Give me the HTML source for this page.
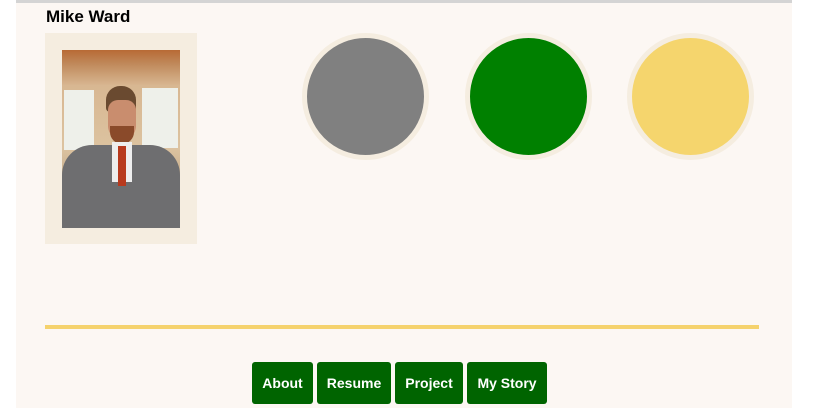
<!DOCTYPE html>
<html><head><style>
body{margin:0;width:816px;height:408px;background:#fff;overflow:hidden;font-family:"Liberation Sans",Arial,sans-serif;position:relative}
.main{position:absolute;left:16px;top:0;width:776px;height:408px;background:#fcf7f3;border-top:3px solid #d4d4d4;box-sizing:border-box}
h1{position:absolute;left:46px;top:7px;margin:0;font-size:17px;font-weight:bold;color:#000}
.frame{position:absolute;left:45px;top:33px;width:152px;height:211px;background:#f5ede0}
.photo{position:absolute;left:62px;top:50px;width:118px;height:178px;overflow:hidden;background:linear-gradient(#b86a35 0,#c08a5c 8%,#d8b792 20%,#dcc3a0 55%,#c9b090 70%,#e6e2dc 100%)}
.c{position:absolute;top:33px;width:117px;height:117px;border-radius:50%;border:5px solid #f5ede0}
.bar{position:absolute;left:45px;top:325px;width:714px;height:4px;background:#f5d26d}
.btn{position:absolute;top:362px;height:42px;background:#006400;color:#fff;font-weight:bold;font-size:14px;line-height:42px;text-align:center;border-radius:3px}
</style></head><body>
<div class="main"></div>
<h1>Mike Ward</h1>
<div class="frame"></div>
<div class="photo">
<div style="position:absolute;left:2px;top:40px;width:30px;height:60px;background:#eef0ea"></div>
<div style="position:absolute;left:80px;top:38px;width:36px;height:60px;background:#eef0ea"></div>
<div style="position:absolute;left:44px;top:36px;width:30px;height:26px;border-radius:14px 14px 4px 4px;background:#6a4a30"></div>
<div style="position:absolute;left:46px;top:50px;width:28px;height:40px;border-radius:10px 10px 14px 14px;background:#c98d6e"></div>
<div style="position:absolute;left:48px;top:76px;width:24px;height:18px;border-radius:0 0 12px 12px;background:#8a4a2a"></div>
<div style="position:absolute;left:0;top:95px;width:118px;height:83px;border-radius:30px 30px 0 0;background:#6e6e70"></div>
<div style="position:absolute;left:50px;top:92px;width:20px;height:40px;background:#eee"></div>
<div style="position:absolute;left:56px;top:96px;width:8px;height:40px;background:#b83a1e"></div>
</div>
<div class="c" style="left:302px;background:#808080"></div>
<div class="c" style="left:465px;background:#008000"></div>
<div class="c" style="left:627px;background:#f5d56d"></div>
<div class="bar"></div>
<div class="btn" style="left:252px;width:61px">About</div>
<div class="btn" style="left:317px;width:74px">Resume</div>
<div class="btn" style="left:395px;width:68px">Project</div>
<div class="btn" style="left:467px;width:80px">My Story</div>
</body></html>
